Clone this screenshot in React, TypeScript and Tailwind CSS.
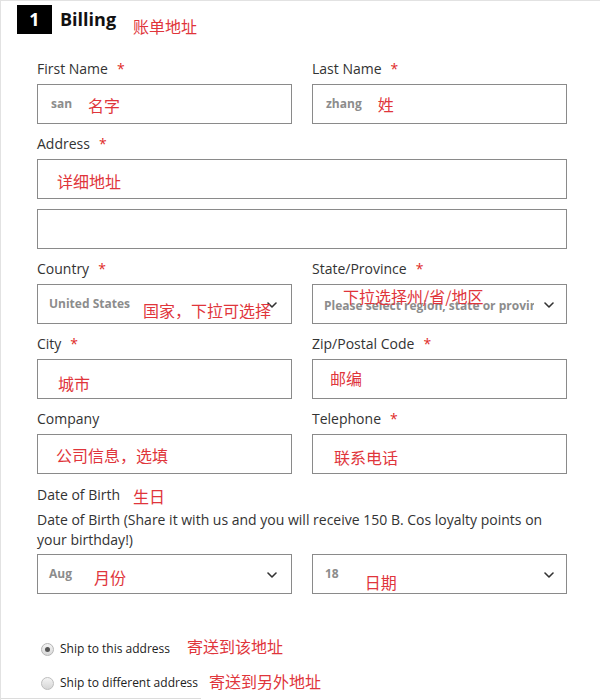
import React from "react";

const RED = "text-[#e0353b]";
const cjk = "font-['Noto_Sans_CJK_SC',sans-serif]";

function Chevron({ className = "" }: { className?: string }) {
  return (
    <svg
      width="10"
      height="6"
      viewBox="0 0 10 6"
      className={className}
      fill="none"
      stroke="#333"
      strokeWidth="1.6"
      strokeLinecap="round"
      strokeLinejoin="round"
    >
      <polyline points="1,1 5,5 9,1" />
    </svg>
  );
}

function Label({ text, required }: { text: string; required?: boolean }) {
  return (
    <div className="h-5 leading-5 text-[14px] text-[#333] mb-[5px] whitespace-nowrap">
      {text}
      {required && <span className="text-[#e02b27] ml-[9px]">*</span>}
    </div>
  );
}

function Note({ children, className = "" }: { children: React.ReactNode; className?: string }) {
  return <span className={`${cjk} ${RED} text-[16px] leading-[20px] whitespace-nowrap ${className}`}>{children}</span>;
}

function Box({ children, className = "" }: { children?: React.ReactNode; className?: string }) {
  return (
    <div className={`relative h-[40px] border border-[#8a8a8a] bg-white flex items-center ${className}`}>
      {children}
    </div>
  );
}

function Ph({ children }: { children: React.ReactNode }) {
  return <span className="text-[12px] font-bold text-[#8c8c8c] whitespace-nowrap">{children}</span>;
}

export default function App() {
  return (
    <div className="w-[600px] h-[700px] bg-white border-l border-t border-[#e2e2e2] relative overflow-hidden font-['Open_Sans',sans-serif]">
      {/* Heading */}
      <div className="h-[58px] pl-[16px] pt-[4px] flex items-start">
        <div className="w-[35px] h-[29px] bg-black text-white font-bold text-[18px] flex items-center justify-center">
          1
        </div>
        <div className="ml-[8px] text-[18px] font-bold text-[#111] leading-[29px]">Billing</div>
        <Note className="ml-[17px] mt-[11px]">账单地址</Note>
      </div>

      <div className="pl-[36px] w-[566px] flex flex-col">
        <div className="grid grid-cols-2 gap-x-[20px] gap-y-[10px]">
          <div>
            <Label text="First Name" required />
            <Box className="pl-[13px]">
              <Ph>san</Ph>
              <Note className="ml-[16px] translate-y-[1px]">名字</Note>
            </Box>
          </div>
          <div>
            <Label text="Last Name" required />
            <Box className="pl-[13px]">
              <Ph>zhang</Ph>
              <Note className="ml-[16px]">姓</Note>
            </Box>
          </div>

          <div className="col-span-2">
            <Label text="Address" required />
            <Box className="pl-[19px]">
              <Note className="translate-y-[2px]">详细地址</Note>
            </Box>
            <Box className="mt-[10px]" />
          </div>

          <div>
            <Label text="Country" required />
            <Box className="pl-[11px]">
              <Ph>United States</Ph>
              <Chevron className="absolute right-[14px] top-[17px]" />
              <Note className="absolute left-[105px] top-[15px]">国家，下拉可选择</Note>
            </Box>
          </div>
          <div>
            <Label text="State/Province" required />
            <Box className="pl-[11px]">
              <span className="w-[210px] overflow-hidden inline-block">
                <Ph>Please select region, state or province</Ph>
              </span>
              <Chevron className="absolute right-[12px] top-[17px]" />
              <Note className="absolute left-[30px] top-[1px]">下拉选择州/省/地区</Note>
            </Box>
          </div>

          <div>
            <Label text="City" required />
            <Box className="pl-[20px]">
              <Note className="translate-y-[4px]">城市</Note>
            </Box>
          </div>
          <div>
            <Label text="Zip/Postal Code" required />
            <Box className="pl-[17px]">
              <Note className="-translate-y-[1px]">邮编</Note>
            </Box>
          </div>

          <div>
            <Label text="Company" />
            <Box className="pl-[18px]">
              <Note className="translate-y-[1px]">公司信息，选填</Note>
            </Box>
          </div>
          <div>
            <Label text="Telephone" required />
            <Box className="pl-[21px]">
              <Note className="translate-y-[3px]">联系电话</Note>
            </Box>
          </div>
        </div>

        <div className="mt-[11px] h-5 leading-5 text-[14px] text-[#333] flex items-start">
          <span>Date of Birth</span>
          <Note className="ml-[13px] mt-[1px]">生日</Note>
        </div>
        <div className="mt-[5px] text-[14px] leading-5 text-[#333]">
          Date of Birth (Share it with us and you will receive 150 B. Cos loyalty points on your birthday!)
        </div>
        <div className="mt-[4px] grid grid-cols-2 gap-x-[20px]">
          <Box className="pl-[11px]">
            <Ph>Aug</Ph>
            <Note className="ml-[22px] translate-y-[3px]">月份</Note>
            <Chevron className="absolute right-[14px] top-[17px]" />
          </Box>
          <Box className="pl-[12px]">
            <Ph>18</Ph>
            <Note className="ml-[26px] translate-y-[8px]">日期</Note>
            <Chevron className="absolute right-[12px] top-[17px]" />
          </Box>
        </div>

        <div className="mt-[45px] pl-[4px] flex flex-col gap-[14px]">
          <div className="h-5 flex items-center">
            <span className="w-[13px] h-[13px] rounded-full border border-[#b5b5b5] bg-gradient-to-b from-[#f4f4f4] to-[#d8d8d8] flex items-center justify-center">
              <span className="w-[5px] h-[5px] rounded-full bg-[#555]" />
            </span>
            <span className="ml-[6px] text-[12px] text-[#222]">Ship to this address</span>
            <Note className="ml-[17px] -translate-y-[3px]">寄送到该地址</Note>
          </div>
          <div className="h-5 flex items-center">
            <span className="w-[13px] h-[13px] rounded-full border border-[#bdbdbd] bg-gradient-to-b from-[#f4f4f4] to-[#d6d6d6]" />
            <span className="ml-[6px] text-[12px] text-[#222]">Ship to different address</span>
            <Note className="ml-[11px] -translate-y-[2px]">寄送到另外地址</Note>
          </div>
        </div>
      </div>
      <div className="absolute left-0 bottom-[1px] w-[200px] h-px bg-[#dcdcdc]" />
    </div>
  );
}
